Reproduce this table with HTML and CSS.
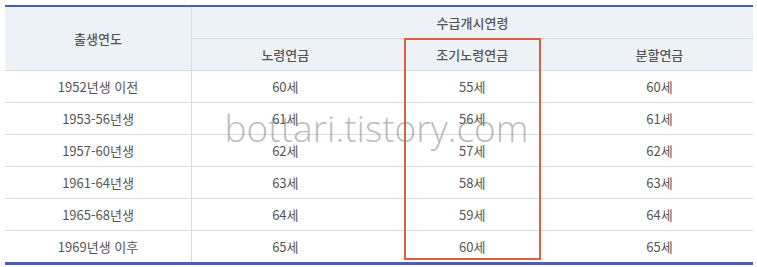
FILE: index.html
```html
<!DOCTYPE html>
<html lang="ko">
<head>
<meta charset="utf-8">
<link rel="stylesheet" href="styles.css">
</head>
<body>
<div class="wrap">
<table class="pension">
  <thead>
    <tr>
      <th rowspan="2" class="first">출생연도</th>
      <th colspan="3">수급개시연령</th>
    </tr>
    <tr>
      <th>노령연금</th>
      <th>조기노령연금</th>
      <th>분할연금</th>
    </tr>
  </thead>
  <tbody>
    <tr><td class="first">1952년생 이전</td><td>60세</td><td>55세</td><td>60세</td></tr>
    <tr><td class="first">1953-56년생</td><td>61세</td><td>56세</td><td>61세</td></tr>
    <tr><td class="first">1957-60년생</td><td>62세</td><td>57세</td><td>62세</td></tr>
    <tr><td class="first">1961-64년생</td><td>63세</td><td>58세</td><td>63세</td></tr>
    <tr><td class="first">1965-68년생</td><td>64세</td><td>59세</td><td>64세</td></tr>
    <tr><td class="first">1969년생 이후</td><td>65세</td><td>60세</td><td>65세</td></tr>
  </tbody>
</table>
<div class="highlight"></div>
<div class="watermark">bottari.tistory.com</div>
</div>
</body>
</html>
```
FILE: styles.css
```css
html, body {
  margin: 0;
  padding: 0;
  background: #ffffff;
}
body {
  padding: 5px 0 0 5px;
  font-family: "Noto Sans CJK KR", "Noto Sans", sans-serif;
}
.wrap {
  position: relative;
  width: 748px;
}
.pension {
  width: 748px;
  border-collapse: collapse;
  table-layout: fixed;
  border-top: 2px solid #4a5cc0;
  border-bottom: 3px solid #4a5cc0;
  color: #555555;
  font-size: 13px;
}
.pension th,
.pension td {
  height: 31px;
  padding: 0;
  text-align: center;
  vertical-align: middle;
  border-bottom: 1px solid #cddfeb;
  line-height: 16px;
}
.pension th {
  background: #edf2f7;
  font-weight: 500;
  color: #555555;
}
.pension .first {
  width: 186px;
  border-right: 1px solid #cddfeb;
}
.pension td {
  font-weight: 400;
}
.highlight {
  position: absolute;
  left: 399px;
  top: 33px;
  width: 133px;
  height: 218px;
  border: 2px solid #d9603d;
}
.watermark {
  position: absolute;
  left: 0;
  right: 0;
  top: 98px;
  text-align: center;
  padding-right: 5px;
  font-family: "Open Sans", sans-serif;
  font-weight: 300;
  font-size: 37px;
  line-height: 50px;
  color: rgba(120, 120, 120, 0.5);
  pointer-events: none;
}
```
